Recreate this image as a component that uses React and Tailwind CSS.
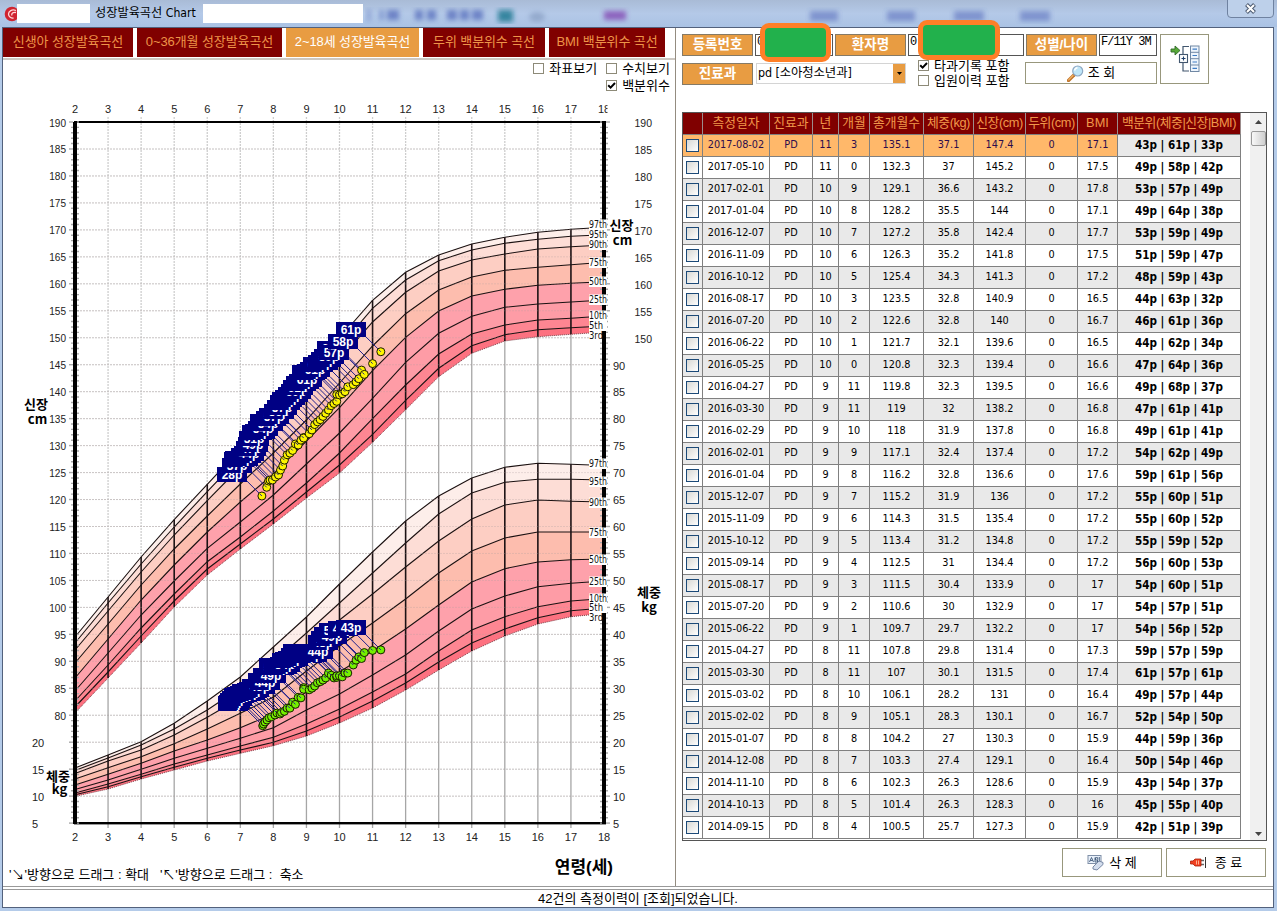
import React from "react";

const KR = "font-['Liberation_Sans','Noto_Sans_CJK_KR',sans-serif]";
const UI = "font-['DejaVu_Sans_Condensed','Noto_Sans_CJK_KR',sans-serif]";

const ROWS = `2017-08-02|11|3|135.1|37.1|147.4|17.1|43|61|33
2017-05-10|11|0|132.3|37|145.2|17.5|49|58|42
2017-02-01|10|9|129.1|36.6|143.2|17.8|53|57|49
2017-01-04|10|8|128.2|35.5|144|17.1|49|64|38
2016-12-07|10|7|127.2|35.8|142.4|17.7|53|59|49
2016-11-09|10|6|126.3|35.2|141.8|17.5|51|59|47
2016-10-12|10|5|125.4|34.3|141.3|17.2|48|59|43
2016-08-17|10|3|123.5|32.8|140.9|16.5|44|63|32
2016-07-20|10|2|122.6|32.8|140|16.7|46|61|36
2016-06-22|10|1|121.7|32.1|139.6|16.5|44|62|34
2016-05-25|10|0|120.8|32.3|139.4|16.6|47|64|36
2016-04-27|9|11|119.8|32.3|139.5|16.6|49|68|37
2016-03-30|9|11|119|32|138.2|16.8|47|61|41
2016-02-29|9|10|118|31.9|137.8|16.8|49|61|41
2016-02-01|9|9|117.1|32.4|137.4|17.2|54|62|49
2016-01-04|9|8|116.2|32.8|136.6|17.6|59|61|56
2015-12-07|9|7|115.2|31.9|136|17.2|55|60|51
2015-11-09|9|6|114.3|31.5|135.4|17.2|55|60|52
2015-10-12|9|5|113.4|31.2|134.8|17.2|55|59|52
2015-09-14|9|4|112.5|31|134.4|17.2|56|60|53
2015-08-17|9|3|111.5|30.4|133.9|17|54|60|51
2015-07-20|9|2|110.6|30|132.9|17|54|57|51
2015-06-22|9|1|109.7|29.7|132.2|17|54|56|52
2015-04-27|8|11|107.8|29.8|131.4|17.3|59|57|59
2015-03-30|8|11|107|30.1|131.5|17.4|61|57|61
2015-03-02|8|10|106.1|28.2|131|16.4|49|57|44
2015-02-02|8|9|105.1|28.3|130.1|16.7|52|54|50
2015-01-07|8|8|104.2|27|130.3|15.9|44|59|36
2014-12-08|8|7|103.3|27.4|129.1|16.4|50|54|46
2014-11-10|8|6|102.3|26.3|128.6|15.9|43|54|37
2014-10-13|8|5|101.4|26.3|128.3|16|45|55|40
2014-09-15|8|4|100.5|25.7|127.3|15.9|42|51|39`
  .split("\n")
  .map((l) => l.split("|"));

// Percentile curves in chart pixels, one row per age 2..18, ordered 97th..3rd
const HEIGHT = [
  [637, 643, 650, 663, 678, 691, 701, 707, 713],
  [597, 603, 611, 624, 639, 653, 665, 672, 678],
  [557, 564, 572, 585, 600, 615, 628, 636, 643],
  [519.7, 527, 535, 549, 565, 581, 594, 601, 607],
  [484.3, 491.7, 500.7, 516, 532, 548.3, 561.7, 569, 575],
  [449, 457, 467, 484, 502, 522, 537, 544, 549],
  [414, 423, 434, 453, 474, 495, 511, 519, 524],
  [376, 386, 398, 420, 441, 464, 483, 492, 498],
  [338, 347, 360, 383, 407.7, 433, 453, 465, 473],
  [300.3, 308.3, 322, 346, 370.7, 398.3, 418.7, 434.3, 442.3],
  [272.3, 280, 292.3, 313.7, 337.3, 362.3, 385, 400.3, 409.7],
  [255, 260.7, 271, 290, 311, 333.3, 354, 368.3, 376.7],
  [244, 250, 260, 277, 296, 316.3, 334, 345.7, 353.3],
  [237.3, 243.3, 254, 270.3, 289.3, 307.3, 325, 334.7, 341],
  [232.3, 239.3, 249, 267.3, 285.3, 304, 320, 329.7, 336.7],
  [229.3, 236.3, 246.7, 264.7, 283.3, 302, 318.3, 327.7, 334.3],
  [227.3, 234.7, 245, 262.3, 281.7, 300, 316, 326, 332],
];
const WEIGHT = [
  [768, 770.5, 773.5, 779, 785, 789.5, 793, 794.7, 796.3],
  [755, 758, 761, 767.7, 774.3, 780, 784, 786.7, 789],
  [741.7, 745, 750, 756.7, 763.3, 769.3, 774.3, 776.7, 779],
  [723.3, 729, 735, 743.7, 751, 758.3, 764, 767.3, 770],
  [701, 710, 717.3, 729, 740, 748.3, 755, 758.3, 761],
  [677, 688, 698, 713.3, 727.7, 738.3, 746, 750, 753.3],
  [647, 662, 677, 697, 714, 727.7, 737.3, 742.3, 745.7],
  [617, 633, 649, 671, 692, 710, 724, 731, 736],
  [584, 603, 620, 646, 672, 694, 709, 717, 723],
  [552, 573, 594, 623, 651, 675, 692, 701, 708],
  [521, 543, 567, 599, 629, 655, 674, 683, 690],
  [496, 514, 541, 573, 605, 631, 651, 662, 670],
  [478, 493, 519, 551, 582, 609, 630, 643, 651],
  [467.3, 482.3, 505, 538, 568.7, 596, 616.7, 629, 636],
  [463.3, 479.3, 500, 532, 562, 586.7, 606.7, 617.7, 624],
  [464.3, 479.3, 501.3, 532, 559.7, 583.3, 601, 610.7, 616.7],
  [465.5, 480, 502, 532, 559, 581, 598.5, 608, 613.5],
];
const FILLS = ["#fdeeea", "#fdddd6", "#fdcec3", "#fdbdae", "#fea1ab", "#fe9ca6", "#fe8692", "#fd7180"];
const PCT = ["97th", "95th", "90th", "75th", "50th", "25th", "10th", "5th", "3rd"];
const LABEL_Y = {
  h: [224.5, 234.5, 244.5, 262.5, 281.5, 299.5, 315.5, 325.5, 335.5],
  w: [463.5, 481.5, 502.5, 532.5, 559.5, 581.5, 598.5, 607.5, 617.5],
};
const AGES = Array.from({ length: 17 }, (_, i) => i + 2);
const ageX = (a) => 75 + (a - 2) * 33.0625;
const cmY = (v) => 122 + (190 - v) * 5.393;
const kgY = (v) => 823 - (v - 5) * 5.393;

const months = (r) => (+r[1] * 12 + +r[2]) / 12;
const hPts = ROWS.map((r) => [ageX(months(r)), cmY(+r[5]), r[8]]).concat([
  [282.7, 466, 49], [280.5, 470, 47], [278.5, 475, 44], [275.5, 477, 41], [272.5, 480, 44],
  [270, 480, 41], [268.5, 481, 41], [266.7, 487.3, 37], [261.9, 496, 28],
]);
const wPts = ROWS.map((r) => [ageX(months(r)), kgY(+r[4]), r[7]]).concat([
  [281.5, 712.5, 41], [280, 714, 44], [277, 713, 43], [275, 715, 40], [271.5, 716.7, 38],
  [269, 717.7, 39], [267, 720, 37], [265, 722, 36], [263.5, 724, 33], [262.7, 725.7, 30],
]);

function Band({ data }) {
  const line = (k) => data.map((d, i) => `${ageX(i + 2)},${d[k]}`);
  return (
    <g>
      {FILLS.map((f, k) => (
        <polygon key={k} fill={f} points={[...line(k), ...line(k + 1).reverse()].join(" ")} />
      ))}
      {PCT.slice(0, 8).map((p, k) => (
        <polyline key={p} points={line(k).join(" ")} fill="none" stroke="#1a1010" strokeWidth="1.1" />
      ))}
      <polyline points={line(8).join(" ")} fill="none" stroke="#7a4048" strokeWidth="1" strokeDasharray="1 1" />
      {data.slice(1, 16).map((d, i) => (
        <line key={i} x1={ageX(i + 3)} x2={ageX(i + 3)} y1={d[0]} y2={d[8]} stroke="#1c1214" strokeWidth="1.6" />
      ))}
    </g>
  );
}

function Points({ pts, color }) {
  const old = [...pts].reverse();
  return (
    <g>
      {old.map(([x, y], i) => (
        <line key={i} x1={x - 15} y1={y - 15} x2={x} y2={y} stroke="#20208c" strokeWidth="1" />
      ))}
      {old.map(([x, y], i) => (
        <g key={i}>
          <circle cx={x} cy={y} r="4" fill={color} stroke="#1a1a00" strokeWidth="1" />
          <line x1={x - 2} y1={y - 2} x2={x} y2={y} stroke="#20208c" strokeWidth="1" />
        </g>
      ))}
      {old.map(([x, y, p], i) => (
        <g key={i}>
          <rect x={Math.round(x - 45)} y={Math.round(y - 29.5)} width="30" height="15" fill="#000084" shapeRendering="crispEdges" />
          <text x={Math.round(x - 30)} y={Math.round(y - 29.5) + 11.5} textAnchor="middle" fontSize="12" fontWeight="bold"
            fontFamily="'Liberation Sans', sans-serif" fill="#fff">{p}p</text>
        </g>
      ))}
    </g>
  );
}

function Chart() {
  const ticks = [];
  for (let y = 122; y <= 824; y += 5.393) ticks.push(y);
  const num = { fontSize: 11, fontFamily: "'Liberation Sans', sans-serif", fill: "#222" };
  const bold = { fontSize: 13, fontWeight: "bold", fontFamily: "'Noto Sans CJK KR', sans-serif", fill: "#000", textAnchor: "middle" };
  return (
    <svg className="block shrink-0" width="670" height="757" viewBox="3 96 670 757">
      {Array.from({ length: 25 }, (_, i) => (
        <line key={i} x1="80" x2="600" y1={149 + i * 26.965} y2={149 + i * 26.965} stroke="#d6d6d6" strokeDasharray="2 1" />
      ))}
      {AGES.slice(1, 16).map((a) => (
        <g key={a}>
          <line x1={ageX(a)} x2={ageX(a)} y1="117" y2={HEIGHT[a - 2][0]} stroke="#cecece" strokeWidth="1.3" strokeDasharray="2 1" />
          <line x1={ageX(a)} x2={ageX(a)} y1={HEIGHT[a - 2][8]} y2="828" stroke="#a6a6a6" strokeWidth="1.3" />
        </g>
      ))}
      <Band data={WEIGHT} />
      <Band data={HEIGHT} />
      {Array.from({ length: 25 }, (_, i) => (
        <line key={i} x1="80" x2="600" y1={149 + i * 26.965} y2={149 + i * 26.965} stroke="#b0a0a0" strokeOpacity="0.3" strokeDasharray="2 1" />
      ))}
      <rect x="74" y="121" width="532" height="2" fill="#000" />
      <rect x="74" y="822" width="532" height="2.4" fill="#000" />
      <rect x="73" y="122" width="4" height="702" fill="#000" />
      <rect x="602" y="122" width="4" height="702" fill="#000" />
      {ticks.map((y, i) => (
        <g key={i} stroke="#a9a9a9" strokeWidth="1.4">
          <line x1={i % 5 ? 71 : 69} x2="73" y1={y} y2={y} />
          <line x1="77" x2="79" y1={y} y2={y} />
          <line x1="600" x2="602" y1={y} y2={y} />
          <line x1="606" x2={i % 5 ? 608 : 610} y1={y} y2={y} />
        </g>
      ))}
      {["h", "w"].map((k) =>
        PCT.map((p, i) => (
          <g key={k + p}>
            <rect x="589" y={LABEL_Y[k][i] - 5} width={i > 7 ? 13 : 18} height="10.5" fill="#fff" />
            <text x="589" y={LABEL_Y[k][i] + 3.8} fontSize="10" textLength={i > 6 ? 14 : 18} lengthAdjust="spacingAndGlyphs"
              fontFamily="'DejaVu Sans Condensed', sans-serif" fill="#111">{p}</text>
          </g>
        ))
      )}
      <Points pts={wPts} color="#74f000" />
      <Points pts={hPts} color="#fdf500" />
      {AGES.map((a) => (
        <g key={a}>
          <text {...num} x={ageX(a)} y="113" textAnchor="middle">{a}</text>
          <text {...num} x={ageX(a)} y="841" textAnchor="middle">{a}</text>
        </g>
      ))}
      <rect x="607.5" y="102" width="6" height="14" fill="#fff" />
      {Array.from({ length: 23 }, (_, i) => (
        <text key={i} {...num} x="66" y={126.5 + i * 26.965} textAnchor="end" textLength={i > 18 ? 11.6 : 16.8} lengthAdjust="spacingAndGlyphs">{190 - i * 5}</text>
      ))}
      {[20, 15, 10, 5].map((v, i) => (
        <text key={v} {...num} x="32" y={747 + i * 26.965}>{v}</text>
      ))}
      {Array.from({ length: 9 }, (_, i) => (
        <text key={i} {...num} x="634.5" y={127 + i * 26.965} textLength="17.5" lengthAdjust="spacingAndGlyphs">{190 - i * 5}</text>
      ))}
      {Array.from({ length: 18 }, (_, i) => (
        <text key={i} {...num} x="613" y={369.5 + i * 26.965}>{90 - i * 5}</text>
      ))}
      <text {...bold} x="36" y="409">신장</text>
      <text {...bold} x="37.5" y="423.5">cm</text>
      <text {...bold} x="621.5" y="230">신장</text>
      <text {...bold} x="622.5" y="245">cm</text>
      <text {...bold} x="649" y="597">체중</text>
      <text {...bold} x="649" y="612">kg</text>
      <text {...bold} x="58" y="781">체중</text>
      <text {...bold} x="59.5" y="794">kg</text>
    </svg>
  );
}

function Check({ on, children }) {
  return (
    <label className="flex h-[15px] items-center gap-[5px] whitespace-nowrap">
      <span className="flex h-[11px] w-[11px] items-center justify-center border border-[#8d8a78] bg-white">
        {on && (
          <svg width="9" height="9" viewBox="0 0 9 9">
            <path d="M1.2 4.2 3.6 6.6 8 2" fill="none" stroke="#000" strokeWidth="2" />
          </svg>
        )}
      </span>
      <span className={`${KR} text-[13px] leading-[15px]`}>{children}</span>
    </label>
  );
}

function Tag({ children }) {
  return (
    <div className={`${KR} flex h-[22px] w-[71px] shrink-0 items-center justify-center whitespace-nowrap border border-[#857a66] bg-[#e89c42] text-[13.5px] font-bold leading-none text-white`}>
      {children}
    </div>
  );
}

const COLS = "grid grid-cols-[20px_67px_43px_26px_31px_54px_50px_52px_52px_40px_123px]";
const HEAD = ["", "측정일자", "진료과", "년", "개월", "총개월수", "체중(kg)", "신장(cm)", "두위(cm)", "BMI", "백분위(체중|신장|BMI)"];

function DataTable() {
  return (
    <div className="ml-[6px] mt-[24px] flex h-[729px] w-[585px] border border-[#555] bg-white">
      <div className="w-[558px] overflow-hidden">
        <div className={`${COLS} h-[22px] border-b border-[#808080] bg-[#800000]`}>
          {HEAD.map((h, i) => (
            <div key={i} className={`${KR} whitespace-nowrap border-r border-[#9c8c8c] text-center text-[12.8px] leading-[20px] text-[#f0984a] ${h.includes("(") ? "tracking-[-0.45px]" : ""}`}>
              {h}
            </div>
          ))}
        </div>
        {ROWS.map((r, n) => {
          const bg = n === 0 ? "bg-[#ffb86a] text-[#2c0c4c]" : n % 2 ? "bg-white" : "bg-[#e9e9e9]";
          const cells = [r[0], "PD", r[1], r[2], r[3], r[4], r[5], "0", r[6]];
          return (
            <div key={n} className={`${COLS} ${UI} h-[22px] border-b border-[#808080] text-[10.8px] leading-[20px] ${bg}`}>
              <div className="flex items-center justify-center border-r border-[#808080]">
                <span className="h-[13px] w-[13px] border border-[#1c4a78] bg-linear-to-br from-[#d8d8d4] to-white" />
              </div>
              {cells.map((c, i) => (
                <div key={i} className="whitespace-nowrap border-r border-[#808080] text-center">{c}</div>
              ))}
              <div className={`whitespace-nowrap border-r border-[#808080] text-center text-[11.6px] font-bold leading-[21px] text-black ${n % 2 ? "bg-white" : "bg-[#e9e9e9]"}`}>
                {r[7]}p | {r[8]}p | {r[9]}p
              </div>
            </div>
          );
        })}
      </div>
      <div className="ml-auto flex w-[16px] flex-col items-center bg-[#f0f0f0] pb-[4px] pt-[7px]">
        <svg width="7" height="4" viewBox="0 0 7 4"><path d="M0 4 3.5 0 7 4z" fill="#444" /></svg>
        <div className="mt-[7px] h-[15px] w-[15px] rounded-[2px] border border-[#999] bg-linear-to-r from-[#f8f8f8] to-[#cfcfcf]" />
        <svg className="mt-auto" width="7" height="4" viewBox="0 0 7 4"><path d="M0 0 3.5 4 7 0z" fill="#444" /></svg>
      </div>
    </div>
  );
}

function Toolbar() {
  const field = "h-[22px] border border-[#555] bg-white pl-[1px] font-['Liberation_Mono',monospace] text-[12px] leading-[14px]";
  return (
    <div className="ml-[6px] mt-[6px] flex gap-[3px]">
      <div className="w-[475px]">
        <div className="flex">
          <Tag>등록번호</Tag>
          <div className={`${field} relative ml-[2px] w-[78px]`}>
            0
            <div className="absolute left-[4px] top-[-12px] h-[39px] w-[71px] rounded-[9px] border-[5px] border-[#ff7f27] bg-[#22b14c]" />
          </div>
          <div className="ml-[2px]"><Tag>환자명</Tag></div>
          <div className={`${field} relative ml-[2px] w-[116px]`}>
            0
            <div className="absolute left-[9px] top-[-15px] h-[40px] w-[82px] rounded-[9px] border-[5px] border-[#ff7f27] bg-[#22b14c]" />
          </div>
          <div className="ml-[2px]"><Tag>성별/나이</Tag></div>
          <div className={`${field} ml-[2px] w-[58px] whitespace-nowrap tracking-[-1px]`}>F/11Y 3M</div>
        </div>
        <div className="mt-[2px] flex h-[30px] items-start">
          <div className="mt-[5px]"><Tag>진료과</Tag></div>
          <div className="ml-[3px] mt-[5px] flex h-[21px] w-[150px] items-center border border-[#d4d4d4] bg-white">
            <span className={`${UI} flex-1 whitespace-nowrap pl-[1px] pb-px text-[12.4px] tracking-[-0.1px]`}>pd [소아청소년과]</span>
            <span className="flex h-full w-[12px] items-center justify-center bg-[#e89c42]">
              <svg width="5" height="3" viewBox="0 0 5 3"><path d="M0 0h5L2.500 3z" fill="#000" /></svg>
            </span>
          </div>
          <div className="ml-[12px] flex w-[107px] flex-col">
            <Check on>타과기록 포함</Check>
            <Check>입원이력 포함</Check>
          </div>
          <button className={`${KR} mt-[4px] flex h-[22px] w-[132px] items-center justify-center gap-[4px] border border-[#98977c] bg-white text-[13px]`}>
            <svg width="17" height="17" viewBox="0 0 17 17">
              <path d="M1.500 15.500 7 10" stroke="#c0742a" strokeWidth="3.200" strokeLinecap="round" />
              <path d="M1.700 14.800 6 10.500" stroke="#f3b568" strokeWidth="1.200" strokeLinecap="round" />
              <circle cx="10.700" cy="6" r="5" fill="#bfe6f8" stroke="#8fa9c4" strokeWidth="1.200" />
              <path d="M7.500 5.500a3.500 3.500 0 0 1 3-2.800" stroke="#fff" strokeWidth="1.400" fill="none" />
            </svg>
            조 회
          </button>
        </div>
      </div>
      <div className="flex h-[50px] w-[49px] items-center justify-center border border-[#98977c] bg-white">
        <svg width="30" height="28" viewBox="0 0 30 28">
          <path d="M1 4h4V1l5 4.500L5 10V7H1z" fill="#58a838" stroke="#2f6a28" strokeWidth="0.900" />
          <path d="M19 1.500h-6v8M13 18v8h6" fill="none" stroke="#42566e" strokeWidth="1.200" />
          <rect x="9.500" y="9.500" width="8" height="8" fill="#fff" stroke="#42566e" strokeWidth="1.100" />
          <path d="M11.500 13.500h4M13.500 11.500v4" stroke="#20406c" strokeWidth="1.100" />
          <rect x="20.500" y="1" width="8.500" height="25.500" fill="#eef5fd" stroke="#7088a4" />
          <path d="M20.500 7.300h8.500M20.500 13.700h8.500M20.500 20h8.500" stroke="#7088a4" />
          <path d="M22.500 4.200h4.500M22.500 10.500h4.500M22.500 17h4.500M22.500 23.300h4.500" stroke="#3e7cc4" strokeWidth="1.200" />
        </svg>
      </div>
    </div>
  );
}

const TABS = [
  ["신생아 성장발육곡선", "w-[130px]"],
  ["0~36개월 성장발육곡선", "w-[145px]"],
  ["2~18세 성장발육곡선", "w-[133px]"],
  ["두위 백분위수 곡선", "w-[122px]"],
  ["BMI 백분위수 곡선", "w-[116px]"],
];

export default function App() {
  return (
    <div className="flex h-[911px] w-[1277px] flex-col overflow-hidden bg-[#b4cbe9] text-black">
      <header className="relative flex h-[27px] shrink-0 items-start bg-linear-to-b from-[#a9bbd6] via-[#b4c9e8] to-[#aac2e4]">
        <svg className="mt-[6px] ml-[4px]" width="13" height="16" viewBox="0 0 13 16">
          <circle cx="8" cy="8" r="7.300" fill="#d02430" />
          <path d="M12 4.500C8 3 4.500 5 4.500 8s3 4.500 5 4M12 6.500C9 6 7 7.500 8 9.500" stroke="#ffd8d8" strokeWidth="1.300" fill="none" />
        </svg>
        <div className="mt-[4px] h-[19px] w-[73px] bg-white" />
        <div className={`${UI} ml-[5px] mt-[4px] w-[108px] whitespace-nowrap text-[12.2px] leading-[18px]`}>성장발육곡선 Chart</div>
        <div className="mt-[4px] h-[19px] w-[160px] bg-white" />
        <svg className="ml-[2px]" width="860" height="27" viewBox="365 0 860 27">
          <defs><filter id="soft"><feGaussianBlur stdDeviation="2.400" /></filter></defs>
          <g filter="url(#soft)" fill="#4056b0" opacity="0.750">
            <path d="M368 9h2v12h-2zM380 10h3v10h-3zM387 10h12v10h-12zM415 10h8v10h-8zM427 10h9v10h-9zM447 10h10v10h-10zM460 10h9v10h-9zM472 10h11v10h-11z" opacity="0.800" />
            <rect x="498" y="10" width="15" height="12" fill="#107088" />
            <ellipse cx="537" cy="17" rx="8" ry="5" fill="#8aa0c4" />
            <rect x="604" y="11" width="22" height="9" fill="#8040b0" />
            <path d="M810 11h28v10h-28zM887 11h28v10h-28zM954 11h30v10h-30zM1020 11h30v10h-30z" opacity="0.600" />
          </g>
        </svg>
        <div className="absolute right-[3px] top-[-4px] flex h-[22px] w-[47px] items-center justify-center rounded-[4px] border border-[#6f82a0] bg-[#bdd0ea] pt-[2px]">
          <svg width="13" height="11" viewBox="0 0 13 11">
            <path d="M2.500 1.500 10.500 9.500M10.500 1.500 2.500 9.500" stroke="#4c5a70" strokeWidth="4" />
            <path d="M3 2 10 9M10 2 3 9" stroke="#fff" strokeWidth="2" />
          </svg>
        </div>
      </header>
      <div className="ml-[2px] flex h-[881px] w-[1272px] flex-col border border-[#52617c] bg-white">
        <div className="flex h-[859px] w-full border-b border-[#999]">
          <section className="flex w-[673px] flex-col border-r border-[#948c80]">
            <div className="flex h-[32px] shrink-0 gap-[4px] border-b-2 border-[#cdc8c2]">
              {TABS.map(([t, w], i) => (
                <div key={t} className={`${KR} ${w} flex h-[29px] items-center justify-center whitespace-nowrap pb-[2px] text-[13px] tracking-[-0.1px] ${i === 2 ? "bg-[#e89c42] text-white" : "bg-[#800000] text-[#ee9448]"}`}>
                  {t}
                </div>
              ))}
            </div>
            <div className="flex h-[36px] shrink-0 justify-end gap-[9px] pr-[5px] pt-[1px]">
              <Check>좌표보기</Check>
              <div className="flex flex-col gap-[2px]">
                <Check>수치보기</Check>
                <Check on>백분위수</Check>
              </div>
            </div>
            <Chart />
            <div className={`${KR} flex items-start justify-between pl-[6px] pr-[62px] pt-[3px]`}>
              <span className="whitespace-pre pt-[10px] text-[13px] leading-[18px]">{"'↘'방향으로 드래그 : 확대   '↖'방향으로 드래그 :  축소"}</span>
              <span className="pt-[1px] text-[17px] font-bold leading-[22px]">연령(세)</span>
            </div>
          </section>
          <section className="flex w-[597px] flex-col">
            <Toolbar />
            <DataTable />
            <div className="ml-[386px] mt-[7px] flex gap-[4px]">
              <button className={`${KR} flex h-[29px] w-[100px] items-center justify-center gap-[5px] border border-[#98977c] bg-white text-[13px]`}>
                <svg width="17" height="17" viewBox="0 0 17 17">
                  <rect x="1" y="1.500" width="13" height="8" fill="#e8f0fa" stroke="#8090a8" />
                  <path d="M2.500 8 4.500 3.500 6.500 8M3.300 6.500h2.400M8 3.500v4.500h2.500V6H8.500V3.700h2.200v2M12.300 3v5" stroke="#405878" strokeWidth="0.900" fill="none" />
                  <path d="m6 13 6-6 4 1.500v2L10 16l-4-1z" fill="#d4deee" stroke="#7888a4" />
                </svg>
                삭 제
              </button>
              <button className={`${KR} flex h-[29px] w-[100px] items-center justify-center gap-[8px] border border-[#98977c] bg-white text-[13px]`}>
                <svg width="17" height="13" viewBox="0 0 17 13">
                  <path d="M10 4.500h4M10 8.500h4" stroke="#666" strokeWidth="1.300" />
                  <path d="M0.500 5H3l2-2h6v7H5L3 8H0.500z" fill="#f04020" stroke="#a82008" strokeWidth="0.800" />
                  <path d="M6.500 4.500v4M8.500 4.500v4" stroke="#ffb090" />
                  <path d="M15.500 1v11" stroke="#333" strokeWidth="1" />
                </svg>
                종 료
              </button>
            </div>
          </section>
        </div>
        <div className={`${KR} mt-[2px] h-[18px] w-full border-t border-[#999] text-center text-[13px] leading-[17px]`}>
          42건의 측정이력이 [조회]되었습니다.
        </div>
      </div>
    </div>
  );
}
